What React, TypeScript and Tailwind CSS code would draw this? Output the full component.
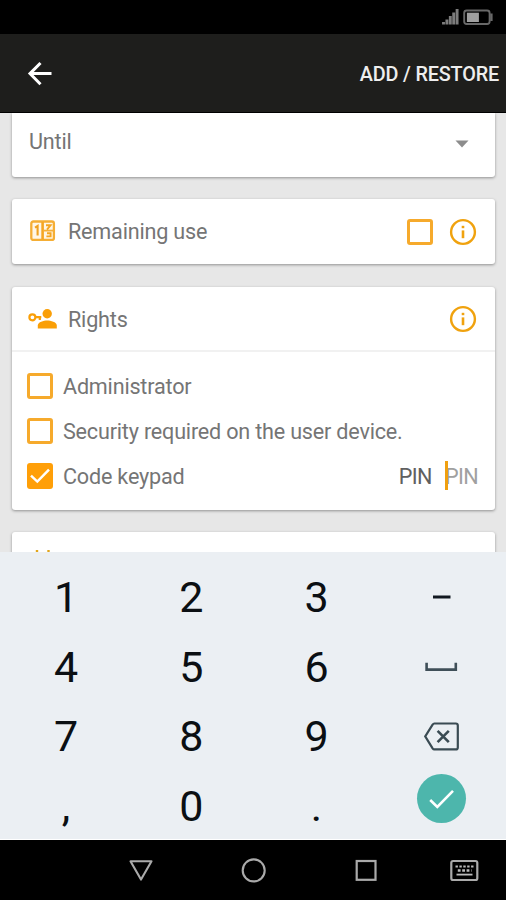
import { useState } from 'react';
import type { ReactNode } from 'react';

function InfoIcon() {
  return (
    <svg width="28" height="28" viewBox="0 0 28 28" fill="none" className="shrink-0">
      <circle cx="14" cy="14" r="11.9" stroke="#F0A20E" strokeWidth="2.4" />
      <path d="M14 12.4V20.2" stroke="#F0A20E" strokeWidth="2.6" />
      <path d="M14 7.8V10.2" stroke="#F0A20E" strokeWidth="2.6" />
    </svg>
  );
}

function CounterIcon() {
  return (
    <svg width="26" height="22" viewBox="0 0 26 22" fill="none" className="-mt-[2px]">
      <rect x="1.3" y="1.5" width="22.6" height="18.4" rx="2" fill="#FFF6E6" stroke="#F5AE35" strokeWidth="2.3" />
      <path d="M12.6 2V19.5" stroke="#F5A623" strokeWidth="2.6" />
      <path d="M13 10.6H24" stroke="#F5B03A" strokeWidth="1.8" />
      <path d="M5 7.6L7.6 6V15.6" stroke="#F0A020" strokeWidth="2.1" />
      <path d="M16 5.2H20.6L17 9.6M17 13.2H20.6V16.4H16.4" stroke="#F5A623" strokeWidth="1.9" />
    </svg>
  );
}

function RightsIcon() {
  return (
    <svg width="30" height="22" viewBox="0 0 30 22" fill="none">
      <circle cx="4.4" cy="9.3" r="3" stroke="#FA9F07" strokeWidth="2.2" />
      <path d="M7.4 9.2H13.3M11.8 9.2V12" stroke="#FA9F07" strokeWidth="2.2" />
      <circle cx="19.2" cy="5.8" r="4.7" fill="#FA9F07" />
      <path d="M9.8 20.4V17.4C9.8 13.8 15.8 12.4 19.2 12.4S28.8 13.8 28.8 17.4V20.4Z" fill="#FA9F07" />
    </svg>
  );
}

type CheckBoxProps = {
  checked: boolean;
  onToggle: () => void;
};

function CheckBox({ checked, onToggle }: CheckBoxProps) {
  return (
    <button
      role="checkbox"
      aria-checked={checked}
      onClick={onToggle}
      className={
        checked
          ? 'flex h-[26px] w-[26px] shrink-0 items-center justify-center rounded-[3px] bg-[#FF9F08]'
          : 'h-[26px] w-[26px] shrink-0 rounded-[3px] border-3 border-[#F6AA2C]'
      }
    >
      {checked && (
        <svg width="26" height="26" viewBox="0 0 26 26" fill="none">
          <path d="M4 12.7L10.3 18.6L22 6.6" stroke="white" strokeWidth="2.5" />
        </svg>
      )}
    </button>
  );
}

function Card({ className, children }: { className: string; children?: ReactNode }) {
  return (
    <section className={`mx-3 shrink-0 bg-white shadow-[0_1px_3px_rgba(0,0,0,0.38)] ${className}`}>
      {children}
    </section>
  );
}

function StatusBar() {
  return (
    <div className="flex h-[34px] shrink-0 items-center justify-end bg-black pr-3">
      <svg width="52" height="18" viewBox="0 0 52 18" fill="none">
        <path
          d="M1.5 16.5V14M4.9 16.5V11.5M8.3 16.5V8M11.7 16.5V4.5M15.1 16.5V1"
          stroke="#7C7C7C"
          strokeWidth="2.9"
        />
        <rect x="22.2" y="2.5" width="25.4" height="13.5" rx="2.5" stroke="#686868" strokeWidth="1.9" />
        <rect x="24.9" y="4.7" width="12" height="9.3" fill="#A0A0A0" />
        <path d="M49.4 5.5V13" stroke="#686868" strokeWidth="2.4" />
      </svg>
    </div>
  );
}

// Keypad glyph keys
const minusKey = (
  <svg width="36" height="30" viewBox="0 0 36 30">
    <path d="M9 14H26.5" stroke="#111820" strokeWidth="3" />
  </svg>
);

const spaceKey = (
  <svg width="36" height="30" viewBox="0 0 36 30" fill="none">
    <path d="M2.6 10.8V17.6H31.8V10.8" stroke="#3F4F58" strokeWidth="2.6" />
  </svg>
);

const backspaceKey = (
  <svg width="36" height="30" viewBox="0 0 36 30" fill="none">
    <path
      d="M10.3 1.5H31.8Q33.8 1.5 33.8 3.5V25.4Q33.8 27.4 31.8 27.4H10.3Q9.4 27.4 8.6 26.3L1.2 14.4L8.6 2.6Q9.4 1.5 10.3 1.5Z"
      stroke="#3A4B53"
      strokeWidth="2.2"
    />
    <path d="M13.6 8.8L24.8 20.1M24.8 8.8L13.6 20.1" stroke="#3A4B53" strokeWidth="2.6" />
  </svg>
);

const doneKey = (
  <span className="-mt-[17px] flex h-[49px] w-[49px] items-center justify-center rounded-full bg-[#4DB6AC]">
    <svg width="49" height="49" viewBox="0 0 49 49" fill="none">
      <path d="M13.2 26L20.3 33L36 16.8" stroke="white" strokeWidth="2.6" />
    </svg>
  </span>
);

const keys: { id: string; label: ReactNode }[] = [
  { id: '1', label: '1' },
  { id: '2', label: '2' },
  { id: '3', label: '3' },
  { id: 'minus', label: minusKey },
  { id: '4', label: '4' },
  { id: '5', label: '5' },
  { id: '6', label: '6' },
  { id: 'space', label: spaceKey },
  { id: '7', label: '7' },
  { id: '8', label: '8' },
  { id: '9', label: '9' },
  { id: 'backspace', label: backspaceKey },
  { id: 'comma', label: ',' },
  { id: '0', label: '0' },
  { id: 'dot', label: '.' },
  { id: 'done', label: doneKey },
];

function Keypad() {
  return (
    <div className="grid h-[288px] shrink-0 grid-cols-4 grid-rows-[69.6px_69.6px_69.6px_69.6px] border-b border-white bg-[#EBEFF3] pt-[11px] pr-[1.7px] pl-[3.3px]">
      {keys.map((key) => (
        <button
          key={key.id}
          aria-label={key.id}
          className="flex items-center justify-center text-[43px] leading-none text-[#0B0F13]"
        >
          {key.label}
        </button>
      ))}
    </div>
  );
}

function NavBar() {
  return (
    <nav className="flex h-[60px] shrink-0 items-center bg-black pl-[127px]">
      <svg width="28" height="28" viewBox="0 0 28 28" fill="none" className="mr-[85px]">
        <path d="M3.5 5.3H24.5L14 23.6Z" stroke="#AAA" strokeWidth="2.1" strokeLinejoin="round" />
      </svg>
      <svg width="28" height="28" viewBox="0 0 28 28" fill="none" className="mr-[84px]">
        <circle cx="13.7" cy="14.4" r="11" stroke="#AAA" strokeWidth="2.1" />
      </svg>
      <svg width="28" height="28" viewBox="0 0 28 28" fill="none" className="mr-[69px]">
        <rect x="4.7" y="5" width="18.8" height="18.8" stroke="#AAA" strokeWidth="2.2" />
      </svg>
      <svg width="30" height="28" viewBox="0 0 30 28" fill="none">
        <rect x="2.3" y="5" width="26" height="19" rx="1.8" stroke="#AAA" strokeWidth="2.2" />
        <path d="M6.5 10.4H24.5" stroke="#BBB" strokeWidth="2" strokeDasharray="2.4 1.5" />
        <path d="M8.8 14.5H22.5" stroke="#BBB" strokeWidth="2.4" strokeDasharray="2.8 1.6" />
        <path d="M7.5 18.6H23.5" stroke="#BBB" strokeWidth="1.8" />
      </svg>
    </nav>
  );
}

export default function App() {
  const [remainingUse, setRemainingUse] = useState(false);
  const [administrator, setAdministrator] = useState(false);
  const [security, setSecurity] = useState(false);
  const [keypad, setKeypad] = useState(true);

  return (
    <div className="flex h-[900px] w-[506px] flex-col overflow-hidden bg-black font-['Roboto',sans-serif] text-[21.6px] leading-none tracking-[-0.2px] text-[#757575]">
      <StatusBar />

      <header className="flex h-[79px] shrink-0 items-center justify-between border-b border-black bg-[#1E1E1C] pr-[7px] pl-[26px]">
        <button aria-label="Back">
          <svg width="28" height="28" viewBox="0 0 28 28" fill="none">
            <path d="M25.5 14.6H4.2M14.5 4L4 14.6L14.5 25.2" stroke="white" strokeWidth="3" />
          </svg>
        </button>
        <button className="pt-[3px] text-[19.8px] font-medium tracking-[-0.15px] text-[#EEEEEE]">ADD / RESTORE</button>
      </header>

      <main className="flex h-[439px] shrink-0 flex-col overflow-hidden bg-[#E7E7E7]">
        <Card className="flex h-[64px] w-[483px] items-start justify-between rounded-b-[3px] pt-[18px] pr-[26px] pl-[17px]">
          <span>Until</span>
          <svg width="14" height="8" viewBox="0 0 14 8" className="mt-[9px]">
            <path d="M0.5 0.5H13.5L7 7.5Z" fill="#8C8C8C" />
          </svg>
        </Card>

        <Card className="mt-[22px] flex h-[65px] w-[483px] items-center rounded-[3px] pr-[18px] pl-[18px]">
          <CounterIcon />
          <span className="ml-3 flex-1">Remaining use</span>
          <CheckBox checked={remainingUse} onToggle={() => setRemainingUse(!remainingUse)} />
          <span className="ml-4">
            <InfoIcon />
          </span>
        </Card>

        <Card className="mt-[23px] h-[223px] w-[483px] rounded-[3px]">
          <div className="flex h-[65px] items-center border-b-2 border-[#F1F1F1] pr-[18px] pl-4">
            <RightsIcon />
            <span className="ml-[10px] flex-1 pt-[2px]">Rights</span>
            <InfoIcon />
          </div>
          <div className="flex flex-col gap-[19px] pt-[21px] pr-[17px] pl-[15px]">
            <div className="flex items-center gap-[10px]">
              <CheckBox checked={administrator} onToggle={() => setAdministrator(!administrator)} />
              <span className="pt-[2px]">Administrator</span>
            </div>
            <div className="flex items-center gap-[10px]">
              <CheckBox checked={security} onToggle={() => setSecurity(!security)} />
              <span className="pt-[2px]">Security required on the user device.</span>
            </div>
            <div className="flex items-center gap-[10px]">
              <CheckBox checked={keypad} onToggle={() => setKeypad(!keypad)} />
              <span className="flex-1 pt-[2px]">Code keypad</span>
              <span className="pt-[2px] tracking-[-0.6px] text-[#606060]">PIN</span>
              <span className="relative ml-[3px] pt-[2px] tracking-[-0.6px] text-[#A0A0A0]">
                PIN
                <span className="absolute -top-[3px] left-0 h-[29px] w-[3px] bg-[#F0A010]" />
              </span>
            </div>
          </div>
        </Card>

        <Card className="mt-[22px] flex h-[65px] w-[483px] items-start rounded-[3px] pt-[18px] pl-[23px]">
          <svg width="16" height="24" viewBox="0 0 16 24" fill="none">
            <path d="M2 0V5M13.5 0V5" stroke="#E2A61C" strokeWidth="2.4" />
          </svg>
        </Card>
      </main>

      <Keypad />
      <NavBar />
    </div>
  );
}
